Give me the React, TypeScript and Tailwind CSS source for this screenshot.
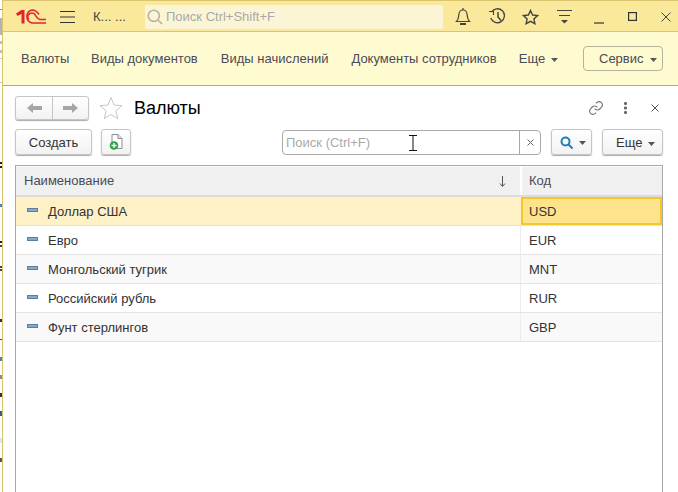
import React from "react";

const font = { fontFamily: '"Liberation Sans", Arial, sans-serif' };

const strip: { top: number; h: number; c: string }[] = [
  { top: 9, h: 1, c: "#8a8a8a" },
  { top: 8, h: 17, c: "#b4b4b4" },
  { top: 6, h: 3, c: "#c9bdb0" },
  { top: 6, h: 3, c: "#c9bdb0" },
  { top: 5, h: 1, c: "#c8c8c8" },
  { top: 23, h: 1, c: "#c8c8c8" },
  { top: 79, h: 2, c: "#222" },
  { top: 2, h: 2, c: "#222" },
  { top: 36, h: 3, c: "#3f87c9" },
  { top: 34, h: 2, c: "#222" },
  { top: 2, h: 2, c: "#444" },
  { top: 19, h: 2, c: "#444" },
  { top: 1, h: 2, c: "#444" },
  { top: 48, h: 3, c: "#333" },
  { top: 17, h: 1, c: "#444" },
  { top: 17, h: 4, c: "#4f7fb0" },
  { top: 14, h: 4, c: "#888" },
  { top: 14, h: 4, c: "#333" },
  { top: 14, h: 5, c: "#3a5a8a" },
  { top: 22, h: 5, c: "#cfeaf2" },
  { top: 15, h: 4, c: "#555" },
];

function Caret({ className = "" }: { className?: string }) {
  return (
    <svg width="7" height="4" viewBox="0 0 7 4" className={className}>
      <path d="M0 0h7L3.500 4z" fill="#555" />
    </svg>
  );
}

function Logo() {
  return (
    <svg width="30" height="15" viewBox="0 0 30 15" fill="none" stroke="#e0262b">
      <path d="M0 4.500L5.500 1H8.500V14.500H5.500V5L1.500 7z" fill="#e0262b" stroke="none" />
      <path d="M23 5.500C21 2.500 18.500 1 16 1A6.700 6.700 0 0 0 16 14H30" strokeWidth="1.600" />
      <path d="M12.800 10.500A3.700 3.700 0 0 1 19 5.500C20 7.500 21.500 10 24 10.500H30" strokeWidth="1.600" />
    </svg>
  );
}

function Row({ name, code, alt, selected }: { name: string; code: string; alt?: boolean; selected?: boolean }) {
  return (
    <div className={`flex h-[29px] shrink-0 border-b border-[#e4e4e4] ${selected ? "bg-[#fdf1c5]" : alt ? "bg-[#f9f9f9]" : "bg-white"}`}>
      <div className="flex flex-1 items-center pl-[11px] pt-[1px]">
        <span className="mb-[3px] mr-[10px] h-[4px] w-[11px] border border-[#5d7f9e] bg-[#86a9cb]" />
        <span>{name}</span>
      </div>
      <div
        className={`flex items-center pt-[1px] ${
          selected ? "ml-[1px] w-[141px] border-2 border-[#f5c828] bg-[#fde38b] pl-[6px]" : "w-[142px] border-l border-[#ececec] pl-[8px]"
        }`}
      >
        {code}
      </div>
    </div>
  );
}

export default function App() {
  return (
    <div style={font} className="flex h-[492px] w-[678px] overflow-hidden bg-white text-[13px] text-[#333]">
      <div className="flex w-[2px] flex-col bg-white">
        {strip.map((s, i) => (
          <div key={i} style={{ marginTop: s.top, height: s.h, backgroundColor: s.c }} />
        ))}
      </div>
      <div className="flex min-w-0 flex-1 flex-col border-l border-[#d9c56f]">
        <header className="flex h-[32px] shrink-0 items-center border-y border-[#d9c56f] bg-[#fbe99b] pt-[1px]">
          <div className="ml-[13px] flex w-[30px]"><Logo /></div>
          <svg width="15" height="12" viewBox="0 0 15 12" className="ml-[14px]" stroke="#333" strokeWidth="1">
            <path d="M0 .5h15M0 6h15M0 11.500h15" />
          </svg>
          <span className="ml-[18px] w-[37px] text-[#444]">К... ...</span>
          <div className="ml-[15px] flex h-[24px] w-[298px] items-center rounded-[2px] bg-[#fcf5d5] pl-[2px] text-[#a9a9a9]">
            <svg width="16" height="16" viewBox="0 0 16 16" fill="none" stroke="#b3b3a0" strokeWidth="1.600">
              <circle cx="6.800" cy="6.800" r="5.600" />
              <path d="M11 11l4 4" />
            </svg>
            <span className="ml-[3px]">Поиск Ctrl+Shift+F</span>
          </div>
          <div className="ml-[12px] flex items-center text-[#444]">
            <svg width="16" height="20" viewBox="0 0 16 20" fill="none" stroke="#444" strokeWidth="1.200">
              <path d="M1.500 14.500h13c-2-2-2-3.500-2.300-6.500C12 5 10.500 3 8 3S4 5 3.800 8c-.3 3-.3 4.500-2.300 6.500z" />
              <path d="M8 1v2" />
              <path d="M5 17h6" strokeWidth="2" />
            </svg>
            <svg width="17" height="17" viewBox="0 0 17 17" fill="none" stroke="#444" strokeWidth="1.300" className="ml-[18px]">
              <path d="M2.500 4A7 7 0 1 1 1.800 10" />
              <path d="M0 3.500h4.500V7" strokeWidth="1.100" />
              <path d="M9 4v5l3 3.500" strokeWidth="1.500" />
            </svg>
            <svg width="17" height="16" viewBox="0 0 17 16" fill="none" stroke="#444" strokeWidth="1.400" className="ml-[16px]">
              <path d="M8.500 1.500l2.100 4.500 4.900.6-3.600 3.300 1 4.800-4.400-2.400-4.400 2.400 1-4.800L1.500 6.600l4.900-.6z" />
            </svg>
            <svg width="15" height="15" viewBox="0 0 15 15" className="ml-[18px]" fill="none" stroke="#444" strokeWidth="1">
              <path d="M0 1.500h15M2 6.500h11" />
              <path d="M4 11h7l-3.500 3.500z" fill="#444" stroke="none" />
            </svg>
            <svg width="10" height="2" viewBox="0 0 10 2" className="ml-[22px] mt-[12px]">
              <path d="M0 1h10" stroke="#333" strokeWidth="1.200" />
            </svg>
            <svg width="9" height="9" viewBox="0 0 9 9" className="ml-[24px]" fill="none" stroke="#333" strokeWidth="1.200">
              <rect x=".6" y=".6" width="7.800" height="7.800" />
            </svg>
            <svg width="10" height="10" viewBox="0 0 10 10" className="ml-[24px]" fill="none" stroke="#444" strokeWidth="1">
              <path d="M.5.500l9 9M9.500.500l-9 9" />
            </svg>
          </div>
        </header>

        <nav className="flex h-[54px] shrink-0 items-center border-b border-[#a8a8a8] bg-[#fffbd0] pl-[18px] text-[#4b4b55]">
          <span className="w-[47px]">Валюты</span>
          <span className="ml-[23px]">Виды документов</span>
          <span className="ml-[23px]">Виды начислений</span>
          <span className="ml-[23px]">Документы сотрудников</span>
          <span className="ml-[22px]">Еще</span>
          <Caret className="ml-[6px] mt-[2px]" />
          <button className="ml-auto mr-[15px] flex h-[25px] w-[80px] items-center rounded-[4px] border border-[#b5b39a] pl-[15px]">
            Сервис
            <Caret className="ml-[6px] mt-[2px]" />
          </button>
        </nav>

        <main className="flex min-h-0 flex-1 flex-col pl-[12px] pr-[15px]">
          <div className="flex h-[36px] shrink-0 items-center pt-[7px]">
            <div className="flex h-[24px] w-[74px] rounded-[3px] border border-[#c5c5c5] bg-gradient-to-b from-white to-[#f2f2f2] shadow-[0_1px_1px_#aaa]">
              <div className="flex w-[37px] items-center justify-center border-r border-[#c5c5c5]">
                <svg width="15" height="10" viewBox="0 0 15 10"><path d="M0 5l6-5v3h9v4H6v3z" fill="#a5a5a5" /></svg>
              </div>
              <div className="flex flex-1 items-center justify-center">
                <svg width="15" height="10" viewBox="0 0 15 10"><path d="M15 5L9 0v3H0v4h9v3z" fill="#a5a5a5" /></svg>
              </div>
            </div>
            <svg width="24" height="24" viewBox="0 0 24 24" className="ml-[10px]" fill="none" stroke="#c3c7cf" strokeWidth="1">
              <path d="M12 1.500l3 7.500 8 .7-6.100 5.200 1.900 7.800-6.800-4.200-6.800 4.200 1.900-7.800L1 9.700 9 9z" />
            </svg>
            <h1 className="ml-[11px] text-[18px] leading-none text-black">Валюты</h1>
            <div className="ml-auto flex items-center pr-[4px]">
              <svg width="16" height="16" viewBox="0 0 24 24" fill="none" stroke="#777" strokeWidth="1.700">
                <path d="M10 13a5 5 0 0 0 7.500.5l3-3a5 5 0 0 0-7-7l-1.700 1.700" />
                <path d="M14 11a5 5 0 0 0-7.500-.5l-3 3a5 5 0 0 0 7 7l1.700-1.700" />
              </svg>
              <svg width="4" height="12" viewBox="0 0 4 12" className="ml-[20px]" fill="#666">
                <rect x="0" y="0" width="3" height="3" rx="1.200" />
                <rect x="0" y="4.500" width="3" height="3" rx="1.200" />
                <rect x="0" y="9" width="3" height="3" rx="1.200" />
              </svg>
              <svg width="8" height="8" viewBox="0 0 8 8" className="ml-[23px]" fill="none" stroke="#555" strokeWidth="1">
                <path d="M.5.500l7 7M7.500.500l-7 7" />
              </svg>
            </div>
          </div>

          <div className="mt-[7px] mb-[10px] flex h-[26px] shrink-0 items-center">
            <button className="h-[26px] w-[77px] rounded-[3px] border border-[#c5c5c5] bg-gradient-to-b from-white to-[#f2f2f2] pt-[1px] shadow-[0_1px_1px_#aaa]">
              Создать
            </button>
            <button className="ml-[9px] flex h-[26px] w-[30px] items-center justify-center rounded-[3px] border border-[#c5c5c5] bg-gradient-to-b from-white to-[#f2f2f2] shadow-[0_1px_1px_#aaa]">
              <svg width="14" height="16" viewBox="0 0 14 16">
                <path d="M3 .5h6l4 4v10H3z" fill="#fff" stroke="#8a8f98" />
                <path d="M9 .5v4h4" fill="#dde3ea" stroke="#8a8f98" />
                <circle cx="5" cy="11.500" r="4.300" fill="#2ea24a" />
                <path d="M5 9v5M2.500 11.500h5" stroke="#fff" strokeWidth="1.300" />
              </svg>
            </button>
            <div className="ml-[151px] flex h-[25px] w-[259px] items-center rounded-[4px] border border-[#a9a9a9] bg-white">
              <span className="ml-[3px] pt-[1px] text-[#a9a9a9]">Поиск (Ctrl+F)</span>
              <div className="relative flex-1">
                <svg width="10" height="16" viewBox="0 0 10 16" className="absolute left-[38px] top-[-7px]" fill="none" stroke="#111" strokeWidth="1">
                  <path d="M1 .5h8M1 15.500h8M5 .5v15" />
                </svg>
              </div>
              <div className="flex h-full w-[21px] items-center justify-center border-l border-[#a9a9a9]">
                <svg width="7" height="7" viewBox="0 0 7 7" fill="none" stroke="#666" strokeWidth="1"><path d="M.5.500l6 6M6.500.500l-6 6" /></svg>
              </div>
            </div>
            <button className="ml-[10px] flex h-[26px] w-[41px] items-center rounded-[3px] border border-[#c5c5c5] bg-gradient-to-b from-white to-[#f2f2f2] pl-[8px] shadow-[0_1px_1px_#aaa]">
              <svg width="13" height="13" viewBox="0 0 13 13" fill="none" stroke="#1f7fb8" strokeWidth="2">
                <circle cx="5.500" cy="5.500" r="4" />
                <path d="M8.500 8.500l4 4" />
              </svg>
              <Caret className="ml-[6px] mt-[2px]" />
            </button>
            <button className="ml-[10px] flex h-[26px] w-[61px] items-center rounded-[3px] border border-[#c5c5c5] bg-gradient-to-b from-white to-[#f2f2f2] pl-[13px] pt-[1px] shadow-[0_1px_1px_#aaa]">
              Еще
              <Caret className="ml-[6px] mt-[2px]" />
            </button>
          </div>

          <div className="flex min-h-0 flex-1 flex-col border border-b-0 border-[#a8a8a8]">
            <div className="flex h-[31px] shrink-0 border-b-2 border-t border-b-[#dcdcdc] border-t-white bg-[#f0f0f0] text-[#4b4b55]">
              <div className="flex flex-1 items-center justify-between pl-[8px] pr-[14px]">
                <span>Наименование</span>
                <svg width="7" height="11" viewBox="0 0 7 11" fill="none" stroke="#555" strokeWidth="1">
                  <path d="M3.500 0v10M1 7.500l2.500 3 2.500-3" />
                </svg>
              </div>
              <div className="flex w-[142px] items-center border-l-2 border-white pl-[7px]">Код</div>
            </div>
            <Row name="Доллар США" code="USD" selected />
            <Row name="Евро" code="EUR" />
            <Row name="Монгольский тугрик" code="MNT" alt />
            <Row name="Российский рубль" code="RUR" />
            <Row name="Фунт стерлингов" code="GBP" alt />
          </div>
        </main>
      </div>
    </div>
  );
}
